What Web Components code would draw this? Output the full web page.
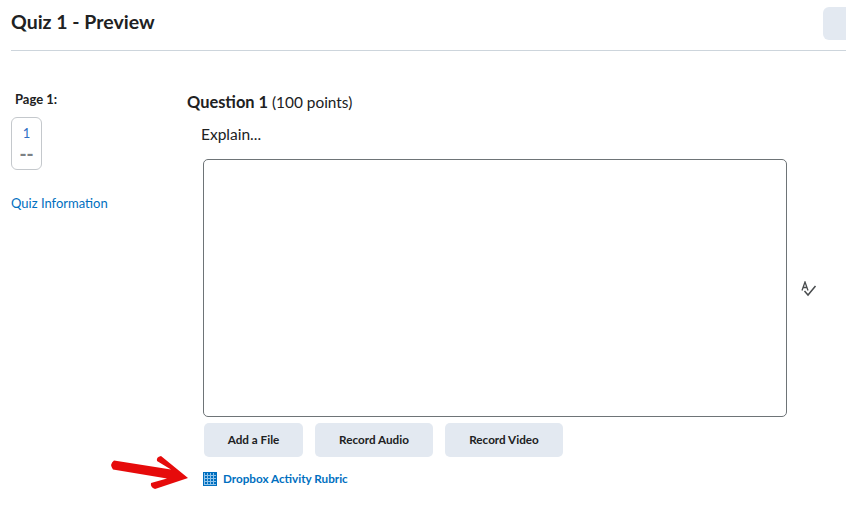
<!DOCTYPE html>
<html lang="en">
<head>
<meta charset="utf-8">
<title>Quiz 1 - Preview</title>
<style>
  html, body { margin: 0; padding: 0; background: #fff; overflow: hidden; }
  body { width: 846px; height: 512px; font-family: Lato, "Liberation Sans", sans-serif; color: #202122; }
</style>
</head>
<body>
<quiz-page></quiz-page>

<script>
class QuizHeader extends HTMLElement {
  constructor() {
    super();
    this.shadowDOM = this.attachShadow({ mode: "open" });
  }

  connectedCallback() {
    this.shadowDOM.innerHTML = `
    <style>
    :host {
      display: flex;
      align-items: center;
      justify-content: space-between;
      height: 50px;
      margin-left: 11px;
      border-bottom: 1px solid #cdd5dc;
      box-sizing: content-box;
      overflow: hidden;
    }
    h1 { margin: 0 0 6px; font-size: 19.5px; line-height: 24px; font-weight: 700; color: #202122; }
    .action {
      width: 30px;
      height: 33px;
      margin: 0 -7px 4px 0;
      border-radius: 6px;
      background: #e3e9f1;
    }
    </style>
    <h1><slot></slot></h1>
    <div class="action"></div>
    `;
  }
}

class QuizSidebar extends HTMLElement {
  constructor() {
    super();
    this.shadowDOM = this.attachShadow({ mode: "open" });
  }

  connectedCallback() {
    this.shadowDOM.innerHTML = `
    <style>
    :host { display: block; width: 187px; flex: none; padding: 40px 0 0 11px; box-sizing: border-box; }
    .label { margin-left: 4px; font-size: 13px; line-height: 16px; font-weight: 700; color: #202122; }
    .tile {
      width: 31px;
      height: 53px;
      margin-top: 10px;
      box-sizing: border-box;
      border: 1px solid #c4c8cc;
      border-radius: 6px;
      display: flex;
      flex-direction: column;
      align-items: center;
      padding-top: 7px;
    }
    .num { font-size: 13px; line-height: 16px; color: #2f6fc4; }
    .dash { font-size: 19px; line-height: 18px; margin-top: 4px; font-weight: 900; color: #7c8185; }
    a { display: block; margin-top: 24px; font-size: 13px; line-height: 18px; color: #006fbf; text-decoration: none; }
    </style>
    <div class="label">Page 1:</div>
    <div class="tile"><span class="num">1</span><span class="dash">--</span></div>
    <a href="#">Quiz Information</a>
    `;
  }
}

class ActionButton extends HTMLElement {
  constructor() {
    super();
    this.shadowDOM = this.attachShadow({ mode: "open" });
  }

  connectedCallback() {
    this.shadowDOM.innerHTML = `
    <style>
    :host { display: block; }
    button {
      display: block;
      height: 34px;
      width: var(--btn-width, 118px);
      padding: 0 0 2px;
      border: 0;
      border-radius: 5px;
      background: #e3e9f1;
      color: #202122;
      font: 700 11.7px/32px Lato, "Liberation Sans", sans-serif;
    }
    </style>
    <button type="button"><slot></slot></button>
    `;
  }
}

class QuizQuestion extends HTMLElement {
  constructor() {
    super();
    this.shadowDOM = this.attachShadow({ mode: "open" });
  }

  connectedCallback() {
    this.shadowDOM.innerHTML = `
    <style>
    :host { display: block; flex: 1; min-width: 0; padding-top: 41px; }
    .title { font-size: 15.4px; line-height: 20px; color: #202122; }
    .title b { font-size: 16.4px; font-weight: 700; }
    .prompt { margin: 12px 0 0 14px; font-size: 15.5px; line-height: 20px; }
    .answer { display: flex; align-items: center; margin: 15px 0 0 16px; }
    .box {
      width: 584px;
      height: 258px;
      box-sizing: border-box;
      border: 1px solid #6e7477;
      border-radius: 5px;
      background: #fff;
    }
    .spell { display: block; margin: 2px 0 0 14px; }
    .buttons { display: flex; gap: 12px; margin: 6px 0 0 17px; }
    .rubric {
      display: flex;
      align-items: center;
      gap: 6px;
      margin: 13px 0 0 16px;
      font-size: 11.7px;
      line-height: 16px;
      font-weight: 700;
      color: #006fbf;
      text-decoration: none;
    }
    .rubric svg { display: block; flex: none; }
    .rubric span { padding-bottom: 2px; }
    </style>
    <div class="title"><b>Question 1</b> (100 points)</div>
    <div class="prompt">Explain...</div>
    <div class="answer">
      <div class="box"></div>
      <svg class="spell" width="16" height="16" viewBox="0 0 16 16" fill="none" stroke="#494c4e" stroke-width="1.3">
        <path d="M1 9.5 L4 1 L7 9.5 M2 6.5 H6"/>
        <path d="M3.5 10 L7 14 L14.5 5" stroke-width="1.5"/>
      </svg>
    </div>
    <div class="buttons">
      <action-button style="--btn-width: 99px">Add a File</action-button>
      <action-button>Record Audio</action-button>
      <action-button>Record Video</action-button>
    </div>
    <a class="rubric" href="#">
      <svg width="14" height="14" viewBox="0 0 14 14">
        <rect width="14" height="14" fill="#006fbf"/>
        <path d="M1 3.5H13M1 6.5H13M1 9.5H13M1 12.5H13M1.5 1V13M4.5 1V13M7.5 1V13M10.5 1V13" stroke="#8fc3ea" stroke-width="1" fill="none"/>
      </svg>
      <span>Dropbox Activity Rubric</span>
    </a>
    `;
  }
}

class RedArrow extends HTMLElement {
  constructor() {
    super();
    this.shadowDOM = this.attachShadow({ mode: "open" });
  }

  connectedCallback() {
    this.shadowDOM.innerHTML = `
    <style>
    :host { position: absolute; left: 108px; top: 454px; display: block; width: 82px; height: 38px; }
    svg { display: block; }
    </style>
    <svg width="82" height="38" viewBox="0 0 82 38">
      <path d="M6 6.5 L63 15.5 L49 7 Q48 3 53 2 L80 24 L47 35 Q42 33 43 29 L59 24.5 L5 15.5 Q1 10 6 6.5 Z" fill="#e60b0b"/>
    </svg>
    `;
  }
}

class QuizPage extends HTMLElement {
  constructor() {
    super();
    this.shadowDOM = this.attachShadow({ mode: "open" });
  }

  connectedCallback() {
    this.shadowDOM.innerHTML = `
    <style>
    :host { display: block; position: relative; width: 846px; height: 512px; overflow: hidden; }
    .body { display: flex; }
    </style>
    <quiz-header>Quiz 1 - Preview</quiz-header>
    <div class="body">
      <quiz-sidebar></quiz-sidebar>
      <quiz-question></quiz-question>
    </div>
    <red-arrow></red-arrow>
    `;
  }
}

customElements.define("quiz-header", QuizHeader);
customElements.define("quiz-sidebar", QuizSidebar);
customElements.define("action-button", ActionButton);
customElements.define("quiz-question", QuizQuestion);
customElements.define("red-arrow", RedArrow);
customElements.define("quiz-page", QuizPage);
</script>
</body>
</html>
